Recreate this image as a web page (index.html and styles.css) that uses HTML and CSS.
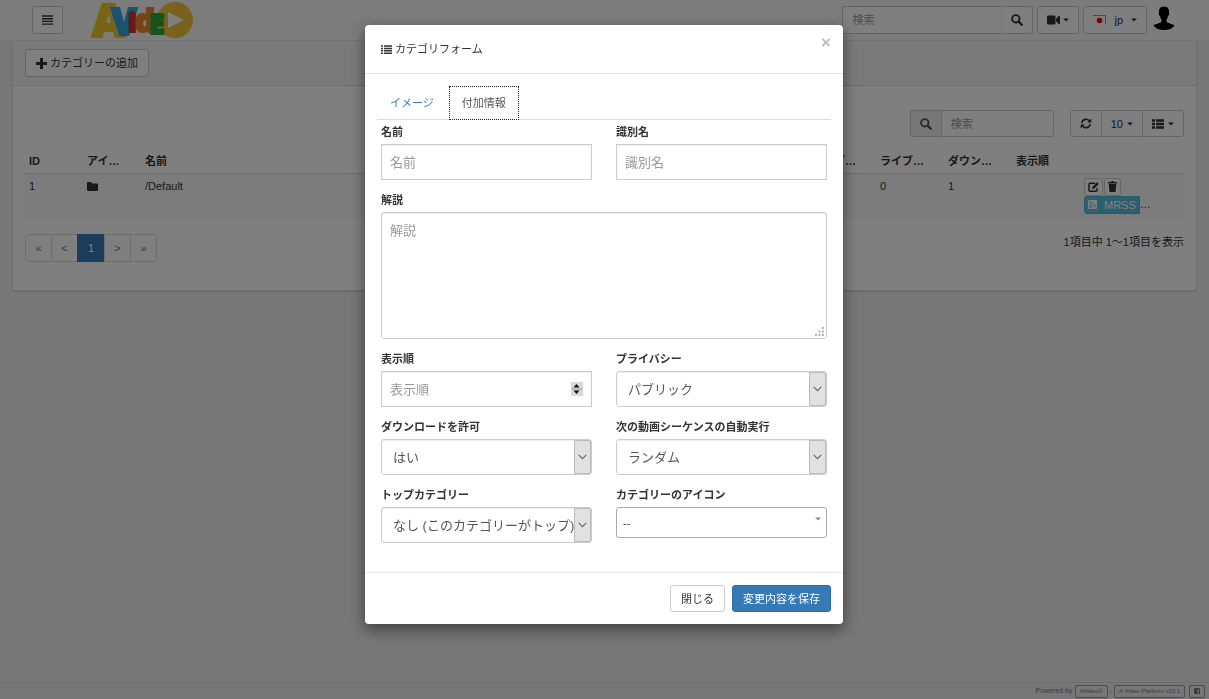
FILE: index.html
```html
<!DOCTYPE html>
<html lang="ja">
<head>
<meta charset="utf-8">
<title>カテゴリフォーム</title>
<link rel="stylesheet" href="styles.css">
</head>
<body>
<svg class="defs" aria-hidden="true">
  <symbol id="search" viewBox="0 0 12 12"><circle cx="4.8" cy="4.8" r="3.7" fill="none" stroke="currentColor" stroke-width="1.9"/><path d="M7.6 7.6l3.2 3.2" stroke="currentColor" stroke-width="2.3" stroke-linecap="round"/></symbol>
  <symbol id="caret" viewBox="0 0 6 4"><path d="M0 0.5h6l-3 3z" fill="currentColor"/></symbol>
  <symbol id="chevron" viewBox="0 0 9 6"><path d="M.7 .8l3.8 3.8L8.3.8" fill="none" stroke="currentColor" stroke-width="1.1"/></symbol>
</svg>
<div class="page">
  <nav class="navbar">
    <div class="nav-left">
      <button class="btn icon-btn" aria-label="メニュー"><svg width="11" height="10" viewBox="0 0 11 10"><path d="M0 1h11M0 3.7h11M0 6.4h11M0 9.1h11" stroke="currentColor" stroke-width="1.4"/></svg></button>
      <a class="logo" href="#" aria-label="AVideo"><svg width="102" height="38" viewBox="0 0 102 38">
        <circle cx="83" cy="19" r="18" fill="#f0c53a"/>
        <path d="M76 11v16l16-8z" fill="#fff"/>
        <g class="logo-text">
          <text x="0" y="36" font-size="46" fill="#f2c71c" stroke="#f2c71c">A</text>
          <text x="19" y="34" font-size="37" fill="#2aa3dc" stroke="#2aa3dc">V</text>
          <text x="36" y="31" font-size="27" fill="#d8252f" stroke="#d8252f">i</text>
          <text x="43" y="31" font-size="31" fill="#e8812a" stroke="#e8812a">d</text>
          <text x="57" y="33" font-size="28" fill="#22a532" stroke="#22a532">E</text>
        </g>
      </svg></a>
    </div>
    <div class="nav-right">
      <form class="group">
        <input class="nav-search" type="text" placeholder="検索" aria-label="検索">
        <button class="btn icon-btn nav-search-btn" type="button" aria-label="検索する"><svg width="12" height="12"><use href="#search"/></svg></button>
      </form>
      <button class="btn icon-btn" aria-label="動画"><svg width="13" height="10" viewBox="0 0 13 10"><rect y=".5" width="8.5" height="9" rx="1" fill="currentColor"/><path d="M9 4l2.5-3H13v8h-1.500L9 6z" fill="currentColor"/></svg><svg width="6" height="4"><use href="#caret"/></svg></button>
      <button class="btn lang"><svg width="13" height="10" viewBox="0 0 13 10"><rect width="13" height="10" fill="#fff"/><path d="M0 .5h12.500v9" fill="none" stroke="#c77"/><circle cx="6.500" cy="5.500" r="2.800" fill="#e01010"/></svg><span>jp</span><svg width="6" height="4"><use href="#caret"/></svg></button>
      <a class="avatar" href="#" aria-label="ユーザー"><svg width="24" height="24" viewBox="0 0 24 24"><circle cx="12" cy="12" r="12" fill="#fff"/><path d="M12 0.500c-4 0-5.500 3-5 6-.8 1 0 3 1 3.500.3 2 1 3 1.500 3.500v2c-1 2-5.500 2-8 4C3.500 22.500 7 24 12 24s8.500-1.500 10.500-4.500c-2.500-2-7-2-8-4v-2c.5-.5 1.200-1.500 1.500-3.500 1-.5 1.800-2.500 1-3.500.5-3-1-6-5-6z" fill="#000"/></svg></a>
    </div>
  </nav>
  <main class="panel">
    <div class="panel-heading">
      <button class="btn"><svg width="11" height="11" viewBox="0 0 11 11"><path d="M5.500 0v11M0 5.500h11" stroke="currentColor" stroke-width="3"/></svg><span>カテゴリーの追加</span></button>
    </div>
    <div class="panel-body">
      <div class="toolbar">
        <div class="group">
          <span class="addon"><svg width="12" height="12"><use href="#search"/></svg></span>
          <input class="grid-search" type="text" placeholder="検索" aria-label="一覧を検索">
        </div>
        <div class="group joined">
          <button class="btn icon-btn" aria-label="更新"><svg width="12" height="11" viewBox="0 0 11 11"><path d="M1.200 4.800A4.400 4.400 0 0 1 9 3M9.800 6.200A4.400 4.400 0 0 1 2 8" fill="none" stroke="currentColor" stroke-width="1.600"/><path d="M10.800.5v4H6.800zM.2 10.500v-4h4z" fill="currentColor"/></svg></button>
          <button class="btn icon-btn">10<svg width="6" height="4"><use href="#caret"/></svg></button>
          <button class="btn icon-btn" aria-label="列"><svg width="12" height="10" viewBox="0 0 12 10"><path d="M0 1.500h3M4 1.500h8M0 5h3M4 5h8M0 8.500h3M4 8.500h8" stroke="currentColor" stroke-width="2.500"/></svg><svg width="6" height="4"><use href="#caret"/></svg></button>
        </div>
      </div>
      <table class="grid">
        <colgroup><col class="c-small"><col class="c-small"><col><col class="c-mid"><col class="c-mid"><col class="c-mid"><col class="c-mid"><col class="c-act"></colgroup>
        <thead><tr><th>ID</th><th>アイ…</th><th>名前</th><th>ライブ…</th><th>ライブ…</th><th>ダウン…</th><th>表示順</th><th></th></tr></thead>
        <tbody><tr>
          <td>1</td>
          <td><svg width="11" height="9" viewBox="0 0 11 9"><path d="M0 1q0-1 1-1h3l1 1.400h5q1 0 1 1V8q0 1-1 1H1Q0 9 0 8z" fill="currentColor"/></svg></td>
          <td>/Default</td><td></td><td>0</td><td>1</td><td></td>
          <td>
            <div class="action-row">
              <button class="btn btn-xs" aria-label="編集"><svg width="11" height="10" viewBox="0 0 11 10"><path d="M7 1.200H2q-1 0-1 1v6q0 1 1 1h6q1 0 1-1V6" fill="none" stroke="currentColor" stroke-width="1.500"/><path d="M4 7l.5-2.300L9 .2l1.800 1.800-4.500 4.500z" fill="currentColor"/></svg></button>
              <button class="btn btn-xs" aria-label="削除"><svg width="9" height="11" viewBox="0 0 9 11"><path d="M0 1h3l.5-1h2L6 1h3v1.500H0zM.8 3h7.400l-.5 7q0 1-1 1H2.300q-1 0-1-1z" fill="currentColor"/></svg></button>
            </div>
            <div class="action-row joined">
              <button class="btn btn-xs info" aria-label="RSS"><svg width="9" height="9" viewBox="0 0 9 9"><rect width="9" height="9" rx="1" fill="#fff"/><path d="M1.500 4.500a3 3 0 0 1 3 3M1.500 2a5.500 5.500 0 0 1 5.500 5.500" fill="none" stroke="#5bc0de"/><circle cx="2.200" cy="6.900" r=".9" fill="#5bc0de"/></svg></button>
              <button class="btn btn-xs info">MRSS</button>
              <span>…</span>
            </div>
          </td>
        </tr></tbody>
      </table>
      <div class="grid-footer">
        <div class="pagination joined">
          <button class="btn">«</button><button class="btn">&lt;</button><button class="btn current">1</button><button class="btn">&gt;</button><button class="btn">»</button>
        </div>
        <span>1項目中 1～1項目を表示</span>
      </div>
    </div>
  </main>
  <footer class="footer">
    <span>Powered by</span><a href="#">AVideo©</a><span class="dash">-</span><a href="#">A Video Platform v10.1</a><a class="social" href="#" aria-label="Facebook"><svg width="6" height="6" viewBox="0 0 6 6"><rect width="6" height="6" rx="1" fill="currentColor"/><path d="M4 6V3h1M4 3H3M4 3V2q0-.8 1-.8" fill="none" stroke="#eee" stroke-width=".8"/></svg></a>
  </footer>
</div>

<div class="overlay">
  <div class="modal" role="dialog" aria-labelledby="title">
    <header class="modal-header">
      <h4 id="title"><svg width="11" height="9" viewBox="0 0 11 9"><path d="M0 1h2M3 1h8M0 3.400h2M3 3.400h8M0 5.800h2M3 5.800h8M0 8.200h2M3 8.200h8" stroke="currentColor" stroke-width="1.500"/></svg>カテゴリフォーム</h4>
      <button class="close" aria-label="閉じる">×</button>
    </header>
    <div class="modal-body">
      <div class="tabs" role="tablist">
        <a href="#" role="tab">イメージ</a>
        <a href="#" role="tab" class="active" aria-selected="true">付加情報</a>
      </div>
      <form class="fields">
        <div class="field"><label for="name">名前</label><input class="control" id="name" type="text" placeholder="名前"></div>
        <div class="field"><label for="slug">識別名</label><input class="control" id="slug" type="text" placeholder="識別名"></div>
        <div class="field wide"><label for="desc">解説</label><div class="holder"><textarea class="control" id="desc" placeholder="解説"></textarea><svg class="grip" width="9" height="9" viewBox="0 0 9 9"><path d="M7 0h2v2H7zM7 3.500h2v2H7zM3.500 3.500h2v2h-2zM7 7h2v2H7zM3.500 7h2v2h-2zM0 7h2v2H0z" fill="#b4b4b4"/></svg></div></div>
        <div class="field"><label for="order">表示順</label><div class="holder"><input class="control" id="order" type="number" placeholder="表示順"><svg class="spinner" width="12" height="14" viewBox="0 0 12 14"><path d="M0 0h12v14H0z" fill="#d8d8d8"/><path d="M0 7h12" stroke="#aaa"/><path d="M2.500 5.500h6l-3-3.500zM2.500 8.500h6l-3 3.500z" fill="#111"/></svg></div></div>
        <div class="field"><label for="privacy">プライバシー</label><div class="holder"><select class="control" id="privacy"><option>パブリック</option></select><span class="drop"><svg width="9" height="6"><use href="#chevron"/></svg></span></div></div>
        <div class="field"><label for="download">ダウンロードを許可</label><div class="holder"><select class="control" id="download"><option>はい</option></select><span class="drop"><svg width="9" height="6"><use href="#chevron"/></svg></span></div></div>
        <div class="field"><label for="next">次の動画シーケンスの自動実行</label><div class="holder"><select class="control" id="next"><option>ランダム</option></select><span class="drop"><svg width="9" height="6"><use href="#chevron"/></svg></span></div></div>
        <div class="field"><label for="parent">トップカテゴリー</label><div class="holder"><select class="control" id="parent"><option>なし (このカテゴリーがトップ)</option></select><span class="drop"><svg width="9" height="6"><use href="#chevron"/></svg></span></div></div>
        <div class="field"><label for="icon">カテゴリーのアイコン</label><div class="holder"><select class="control icon-select" id="icon"><option>--</option></select><svg class="icon-caret" width="6" height="4"><use href="#caret"/></svg></div></div>
      </form>
    </div>
    <footer class="modal-footer">
      <button class="btn">閉じる</button>
      <button class="btn primary">変更内容を保存</button>
    </footer>
  </div>
</div>
</body>
</html>
```
FILE: styles.css
```css
* { box-sizing: border-box; }
body {
  margin: 0;
  background: #eee;
  color: #333;
  font: 11px/16px "Liberation Sans", "Noto Sans CJK JP", sans-serif;
}
button, input, select, textarea { font: inherit; color: inherit; margin: 0; }
a { color: inherit; text-decoration: none; }
svg { display: block; flex: none; }
.defs { position: absolute; width: 0; height: 0; }

.page { min-height: 100vh; display: flex; flex-direction: column; }
.btn {
  display: inline-flex;
  align-items: center;
  justify-content: center;
  gap: 3px;
  height: 28px;
  padding: 0 10px;
  background: #fff;
  border: 1px solid #ccc;
  border-radius: 3px;
  white-space: nowrap;
}
.icon-btn { padding: 0 9px; }
.primary { background: #337ab7; border-color: #2e6da4; color: #fff; }
.group { display: flex; margin: 0; }
.joined .btn { border-radius: 0; }
.joined .btn + .btn { margin-left: -1px; }
.joined .btn:first-child { border-radius: 3px 0 0 3px; }
.joined .btn:last-child { border-radius: 0 3px 3px 0; }
::placeholder { color: #999; opacity: 1; }

.navbar {
  display: flex;
  justify-content: space-between;
  height: 41px;
  padding: 0 33px 0 32px;
  background: #f8f8f8;
  border-bottom: 1px solid #e7e7e7;
}
.nav-left { display: flex; align-items: center; gap: 29px; }
.logo svg { overflow: visible; }
.logo-text { font-family: "Open Sans", sans-serif; font-weight: 800; stroke-width: 2; opacity: .95; }
.nav-right { display: flex; gap: 4px; padding-top: 6px; }
.nav-search {
  width: 160px;
  height: 28px;
  padding: 0 9px;
  border: 1px solid #ccc;
  border-right-color: #eee;
  border-radius: 3px 0 0 3px;
  background: #fff;
}
.nav-search-btn { border-left: 0; border-radius: 0 3px 3px 0; }
.lang { gap: 8px; padding: 0 9px; }
.avatar { margin-left: 1px; }

.panel {
  margin: 0 12px;
  background: #fff;
  border: 1px solid #ddd;
  border-top: 0;
  border-radius: 3px;
  box-shadow: 0 1px 1px rgba(0, 0, 0, .1);
}
.panel-heading { padding: 8px 12px; background: #f5f5f5; border-bottom: 1px solid #ddd; }
.panel-heading .btn { display: flex; }
.panel-body { padding: 24px 12px 28px; }
.toolbar { display: flex; justify-content: flex-end; gap: 16px; margin-bottom: 11px; }
.toolbar .btn { height: 27px; gap: 4px; }
.addon {
  display: flex;
  align-items: center;
  padding: 0 9px;
  background: #eee;
  border: 1px solid #ccc;
  border-right: 0;
  border-radius: 3px 0 0 3px;
  color: #555;
}
.grid-search {
  width: 113px;
  height: 27px;
  padding: 0 9px;
  border: 1px solid #ccc;
  border-radius: 0 3px 3px 0;
}
.grid { width: 100%; table-layout: fixed; border-collapse: collapse; }
.c-small { width: 58px; }
.c-mid { width: 68px; }
.c-act { width: 104px; }
.grid th { height: 25px; padding: 2px 4px 0; text-align: left; border-bottom: 1px solid #ddd; white-space: nowrap; }
.grid td { height: 44px; padding: 4px; vertical-align: top; background: #f9f9f9; }
.grid td svg { margin-top: 4px; }
.grid td .btn svg { margin: 0; }
.action-row { display: flex; gap: 1px; height: 18px; }
.action-row.joined { gap: 0; }
.btn.btn-xs { height: 18px; padding: 0 3px; }
.info { background: #5bc0de; border-color: #46b8da; color: #fff; }
.grid-footer { display: flex; justify-content: space-between; margin-top: 16px; }
.pagination { display: flex; }
.pagination .btn { width: 27px; padding: 0; color: #777; border-color: #ddd; }
.pagination .btn.current { width: 28px; background: #337ab7; border-color: #337ab7; color: #fff; }
.footer {
  display: flex;
  justify-content: flex-end;
  align-items: center;
  gap: 2px;
  height: 17px;
  margin-top: auto;
  padding-right: 4px;
  border-top: 1px solid #ddd;
  color: #777;
  font-size: 7px;
  line-height: 8px;
}
.footer a { display: flex; align-items: center; height: 13px; padding: 0 4px; border: 1px solid #999; border-radius: 2px; font-size: 6px; }
.footer .social { margin-left: 2px; }

.overlay {
  position: fixed;
  inset: 0;
  z-index: 10;
  display: flex;
  justify-content: center;
  align-items: flex-start;
  padding: 25px 11px 25px 10px;
  background: rgba(0, 0, 0, .5);
}
.modal {
  width: 100%;
  max-width: 478px;
  background: #fff;
  border-radius: 4px;
  box-shadow: 0 5px 15px rgba(0, 0, 0, .5);
}
.modal-header {
  display: flex;
  justify-content: space-between;
  align-items: flex-start;
  padding: 8px 12px 16px 16px;
  border-bottom: 1px solid #e5e5e5;
}
.modal h4 { display: flex; align-items: center; gap: 3px; margin: 8px 0 0; font-size: 11px; font-weight: 400; }
.close { padding: 0; width: 10px; border: 0; background: none; color: #bbb; font-size: 17px; line-height: 20px; font-weight: 700; }
.modal-body { padding: 12px 12px 29px; }
.tabs { display: flex; gap: 2px; border-bottom: 1px solid #ddd; }
.tabs a { margin-bottom: -1px; padding: 8px 12px; border: 1px solid transparent; color: #337ab7; line-height: 16px; }
.tabs .active { border: 1px dotted #222; background: #fff; color: #555; }
.fields { display: grid; grid-template-columns: 1fr 1fr; gap: 12px 24px; align-items: start; margin: 4px 4px 0; }
.field { display: flex; flex-direction: column; gap: 4px; min-width: 0; }
.wide { grid-column: 1 / -1; }
.field label { font-weight: 700; }
.holder { position: relative; display: flex; }
.control {
  width: 100%;
  height: 36px;
  padding: 0 8px;
  border: 1px solid #ccc;
  border-radius: 0;
  background: #fff;
  box-shadow: inset 0 1px 1px rgba(0, 0, 0, .075);
  color: #555;
  font-size: 13px;
  line-height: 18px;
}
textarea.control { height: 127px; padding: 9px 8px; border-radius: 3px; resize: none; }
select.control { appearance: none; padding: 2px 0 0 11px; border-radius: 3px; }
input[type="number"] { appearance: textfield; }
.control.icon-select { height: 31px; padding: 0 0 0 6px; border-color: #aaa; box-shadow: none; font-size: 11px; color: #444; }
.grip { position: absolute; right: 3px; bottom: 3px; }
.spinner { position: absolute; right: 9px; top: 11px; }
.drop {
  position: absolute;
  inset: 1px 1px 1px auto;
  width: 17px;
  display: flex;
  align-items: center;
  justify-content: center;
  background: #e1e1e1;
  border: 1px solid #bbb;
  border-radius: 0 2px 2px 0;
  color: #666;
  pointer-events: none;
}
.icon-caret { position: absolute; right: 6px; top: 10px; color: #888; pointer-events: none; }
.modal-footer { display: flex; justify-content: flex-end; gap: 7px; padding: 12px; border-top: 1px solid #e5e5e5; }
.modal-footer .btn { height: 27px; }
```
